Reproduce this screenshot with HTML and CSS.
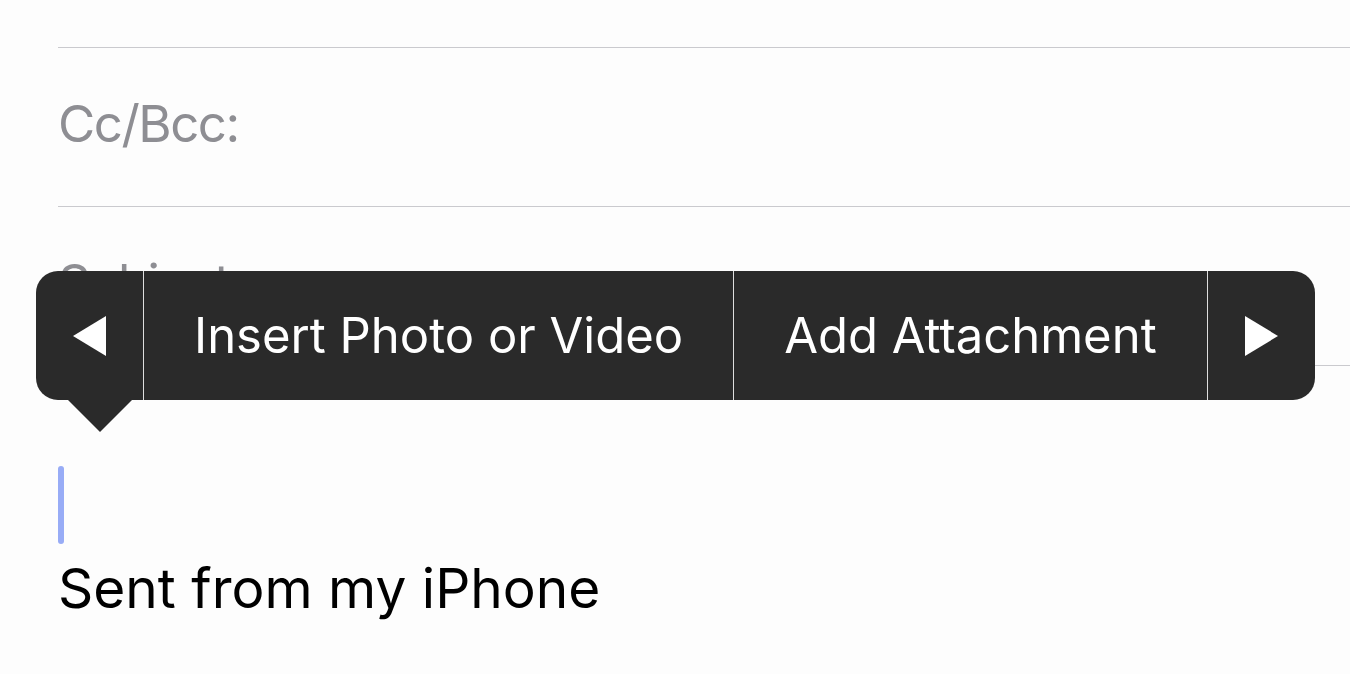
FILE: index.html
```html
<!DOCTYPE html>
<html lang="en">
<head>
    <meta charset="UTF-8">
    <title>New Message</title>
    <link rel="stylesheet" href="styles.css">
</head>
<body>
    <div class="compose">
        <div class="field field-top"></div>
        <div class="field">
            <span class="label">Cc/Bcc:</span>
        </div>
        <div class="field">
            <span class="label">Subject:</span>
        </div>
        <div class="body">
            <div class="caret"></div>
            <p class="signature">Sent from my iPhone</p>
        </div>
    </div>

    <!-- edit menu -->
    <div class="menu">
        <div class="menu-arrow">
            <svg width="33" height="40" viewBox="0 0 33 40"><polygon points="33,0 33,40 0,20" fill="#fff"/></svg>
        </div>
        <div class="menu-item">Insert Photo or Video</div>
        <div class="menu-item">Add Attachment</div>
        <div class="menu-arrow">
            <svg width="33" height="40" viewBox="0 0 33 40"><polygon points="0,0 0,40 33,20" fill="#fff"/></svg>
        </div>
        <div class="menu-pointer"></div>
    </div>
</body>
</html>
```

FILE: styles.css
```css
body {
    margin: 0;
    background: #fdfdfd;
    font-family: 'Inter', 'Liberation Sans', sans-serif;
    overflow: hidden;
}

.compose {
    padding-left: 58px;
}

.field {
    height: 158px;
    border-bottom: 1px solid #cacace;
    display: flex;
    align-items: center;
}

.field-top {
    height: 47px;
}

.label {
    font-size: 51px;
    letter-spacing: -1.5px;
    color: #8e8e93;
    margin-top: -8px;
}

.body {
    padding-top: 100px;
}

.caret {
    width: 6px;
    height: 78px;
    border-radius: 3px;
    background: #98acf6;
}

.signature {
    margin: 11px 0 0;
    font-size: 55px;
    color: #000;
}

.menu {
    position: absolute;
    left: 36px;
    top: 271px;
    height: 129px;
    display: flex;
    background: #2a2a2a;
    border-radius: 22px;
}

.menu-arrow {
    width: 107px;
    display: flex;
    justify-content: center;
    align-items: center;
}

.menu-item {
    display: flex;
    align-items: center;
    padding: 0 50px;
    color: #fff;
    font-size: 49px;
    border-left: 1px solid #dedede;
}

.menu-item + .menu-arrow {
    border-left: 1px solid #dedede;
}

.menu-pointer {
    position: absolute;
    left: 32px;
    top: 100%;
    border-left: 32px solid transparent;
    border-right: 32px solid transparent;
    border-top: 32px solid #2a2a2a;
}
```
